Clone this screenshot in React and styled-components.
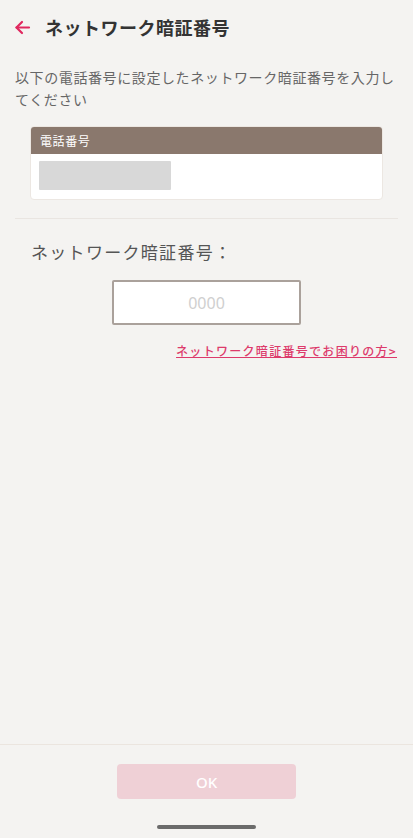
import React from 'react';
import styled, { createGlobalStyle } from 'styled-components';

const GlobalStyle = createGlobalStyle`
  html, body {
    margin: 0;
    padding: 0;
    background: #f4f3f1;
  }
  body {
    font-family: "Noto Sans CJK JP", "Noto Sans", sans-serif;
  }
`;

const Screen = styled.div`
  width: 413px;
  height: 838px;
  display: flex;
  flex-direction: column;
  background: #f4f3f1;
  overflow: hidden;
`;

const Header = styled.header`
  height: 54px;
  display: flex;
  align-items: center;
  padding: 0 14px;
  gap: 14px;
`;

const BackButton = styled.button`
  border: none;
  background: none;
  padding: 0;
  display: flex;
  width: 17px;
  height: 17px;
`;

const Title = styled.h1`
  margin: 0;
  font-size: 18px;
  font-weight: 700;
  color: #333;
  letter-spacing: 0.5px;
`;

const Content = styled.main`
  flex: 1;
  padding: 12px 15px 0;
  display: flex;
  flex-direction: column;
`;

const Lead = styled.p`
  margin: 0;
  font-size: 14px;
  letter-spacing: 0.6px;
  line-height: 22px;
  color: #666;
`;

const Card = styled.div`
  margin: 16px 15px 0;
  background: #fff;
  border-radius: 4px;
  border: 1px solid #ece7e2;
  overflow: hidden;
`;

const CardHead = styled.div`
  background: #8a786d;
  height: 27px;
  padding: 0 9px;
  display: flex;
  align-items: center;
  font-size: 12px;
  letter-spacing: 0.6px;
  color: #fff;
`;

const CardBody = styled.div`
  padding: 7px 8px 9px;
`;

const Masked = styled.div`
  width: 132px;
  height: 29px;
  background: #d8d8d8;
  border-radius: 1px;
`;

const Divider = styled.hr`
  border: none;
  border-top: 1px solid #e9e5e1;
  margin: 18px 0 0;
`;

const FieldLabel = styled.div`
  margin: 20px 0 0 16px;
  font-size: 17px;
  color: #555;
  letter-spacing: 1.3px;
`;

const PinInput = styled.input`
  display: block;
  align-self: center;
  margin-top: 16px;
  width: 189px;
  height: 45px;
  box-sizing: border-box;
  border: 2px solid #aaa19b;
  border-radius: 2px;
  background: #fff;
  text-align: center;
  font-family: "Noto Sans", sans-serif;
  font-size: 16px;
  color: #333;
  outline: none;
  &::placeholder {
    color: #cfcfcf;
  }
`;

const HelpLink = styled.a`
  align-self: flex-end;
  margin-top: 17px;
  margin-right: 1px;
  font-size: 12px;
  font-weight: 500;
  color: #dd3a6b;
  text-decoration: underline;
  letter-spacing: 1.3px;
`;

const Footer = styled.footer`
  border-top: 1px solid #ebe5df;
  height: 94px;
  display: flex;
  flex-direction: column;
  align-items: center;
  padding-top: 19px;
  box-sizing: border-box;
`;

const OkButton = styled.button`
  width: 179px;
  height: 35px;
  border: none;
  border-radius: 4px;
  background: #efd0d6;
  color: #fff;
  font-family: "Noto Sans", sans-serif;
  font-size: 15px;
  font-weight: 500;
`;

const HomeBar = styled.div`
  margin-top: 26px;
  width: 99px;
  height: 4px;
  border-radius: 2px;
  background: #6b6b6b;
`;

export default function App() {
  return (
    <>
      <GlobalStyle />
      <Screen>
        <Header>
          <BackButton aria-label="戻る">
            <svg width="17" height="17" viewBox="0 0 17 17" fill="none" stroke="#e0285f" strokeWidth="2.2" strokeLinecap="round" strokeLinejoin="round">
              <path d="M15 8.5H2.5" />
              <path d="M8 3L2.5 8.5L8 14" />
            </svg>
          </BackButton>
          <Title>ネットワーク暗証番号</Title>
        </Header>
        <Content>
          <Lead>以下の電話番号に設定したネットワーク暗証番号を入力してください</Lead>
          <Card>
            <CardHead>電話番号</CardHead>
            <CardBody>
              <Masked />
            </CardBody>
          </Card>
          <Divider />
          <FieldLabel>ネットワーク暗証番号：</FieldLabel>
          <PinInput placeholder="0000" inputMode="numeric" />
          <HelpLink href="#">ネットワーク暗証番号でお困りの方&gt;</HelpLink>
        </Content>
        <Footer>
          <OkButton disabled>OK</OkButton>
          <HomeBar />
        </Footer>
      </Screen>
    </>
  );
}
